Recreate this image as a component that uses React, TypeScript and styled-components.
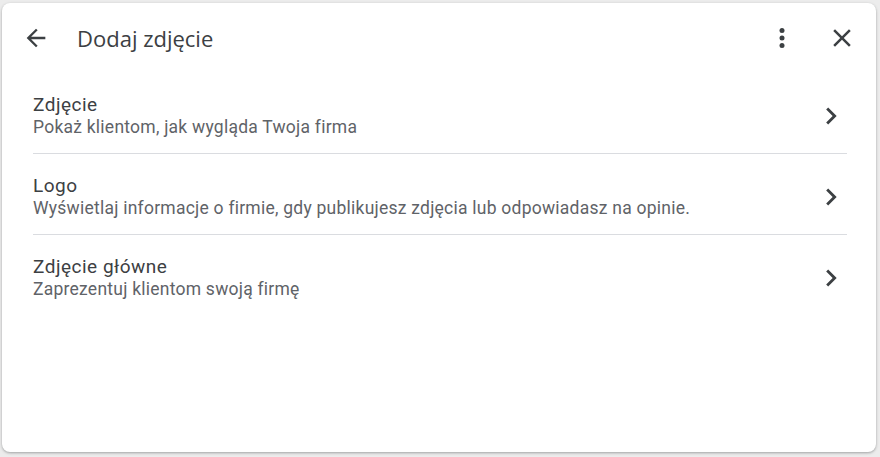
import React from 'react';
import styled, { createGlobalStyle } from 'styled-components';

const GlobalStyle = createGlobalStyle`
  html, body {
    margin: 0;
    padding: 0;
    background: #ececec;
    font-family: Roboto, "Liberation Sans", Arial, sans-serif;
  }
`;

const Page = styled.div`
  width: 880px;
  height: 457px;
  padding: 3px 4px 5px 2px;
  box-sizing: border-box;
`;

const Card = styled.div`
  height: 100%;
  background: #fff;
  border-radius: 8px;
  box-shadow: 0 1px 3px rgba(60, 64, 67, 0.3), 0 1px 2px rgba(60, 64, 67, 0.15);
  display: flex;
  flex-direction: column;
`;

const Header = styled.header`
  height: 70px;
  display: flex;
  align-items: center;
  padding: 0 19px 0 20px;
`;

const IconButton = styled.button<{ $size: number }>`
  width: ${p => p.$size}px;
  height: ${p => p.$size}px;
  border: none;
  background: none;
  padding: 0;
  display: flex;
  align-items: center;
  justify-content: center;
  color: #3c4043;
  cursor: pointer;

  svg {
    width: ${p => p.$size}px;
    height: ${p => p.$size}px;
  }
`;

const Title = styled.h1`
  margin: 0 0 0 27px;
  flex: 1;
  font-family: "Open Sans", Roboto, sans-serif;
  font-weight: 400;
  font-size: 22px;
  color: #3c4043;
`;

const Actions = styled.div`
  display: flex;
  align-items: center;
  gap: 30px;
`;

const List = styled.ul`
  list-style: none;
  margin: 0;
  padding: 0 29px 0 31px;
`;

const Item = styled.li<{ $last?: boolean }>`
  display: flex;
  align-items: center;
  height: 81px;
  padding-top: 5px;
  box-sizing: border-box;
  border-bottom: ${p => (p.$last ? 'none' : '1px solid #dadce0')};
  cursor: pointer;
`;

const Texts = styled.div`
  flex: 1;
  display: flex;
  flex-direction: column;
`;

const ItemTitle = styled.div`
  font-size: 19px;
  letter-spacing: 0.5px;
  color: #3c4043;
  line-height: 22px;
`;

const ItemSub = styled.div`
  font-size: 17.5px;
  letter-spacing: 0.24px;
  color: #5f6368;
  line-height: 22px;
`;

const Chevron = styled.div`
  width: 34px;
  height: 34px;
  color: #3c4043;
  margin-right: -1px;

  svg {
    width: 34px;
    height: 34px;
    display: block;
  }
`;

const BackIcon = () => (
  <svg viewBox="0 0 24 24" fill="currentColor">
    <path d="M20 11H7.83l5.59-5.59L12 4l-8 8 8 8 1.41-1.41L7.83 13H20v-2z" />
  </svg>
);

const MoreIcon = () => (
  <svg viewBox="0 0 24 24" fill="currentColor">
    <circle cx="12" cy="6" r="2" />
    <circle cx="12" cy="12" r="2" />
    <circle cx="12" cy="18" r="2" />
  </svg>
);

const CloseIcon = () => (
  <svg viewBox="0 0 24 24" fill="currentColor">
    <path d="M19 6.41 17.59 5 12 10.59 6.41 5 5 6.41 10.59 12 5 17.59 6.41 19 12 13.41 17.59 19 19 17.59 13.41 12z" />
  </svg>
);

const ChevronIcon = () => (
  <svg viewBox="0 0 24 24" fill="currentColor">
    <path d="M10 6 8.59 7.41 13.17 12l-4.58 4.59L10 18l6-6z" />
  </svg>
);

const options = [
  { title: 'Zdjęcie', sub: 'Pokaż klientom, jak wygląda Twoja firma' },
  {
    title: 'Logo',
    sub: 'Wyświetlaj informacje o firmie, gdy publikujesz zdjęcia lub odpowiadasz na opinie.',
  },
  { title: 'Zdjęcie główne', sub: 'Zaprezentuj klientom swoją firmę' },
];

export default function App() {
  return (
    <Page>
      <GlobalStyle />
      <Card>
        <Header>
          <IconButton $size={28} aria-label="Wstecz">
            <BackIcon />
          </IconButton>
          <Title>Dodaj zdjęcie</Title>
          <Actions>
            <IconButton $size={30} aria-label="Więcej">
              <MoreIcon />
            </IconButton>
            <IconButton $size={30} aria-label="Zamknij">
              <CloseIcon />
            </IconButton>
          </Actions>
        </Header>
        <List>
          {options.map((o, i) => (
            <Item key={o.title} $last={i === options.length - 1}>
              <Texts>
                <ItemTitle>{o.title}</ItemTitle>
                <ItemSub>{o.sub}</ItemSub>
              </Texts>
              <Chevron>
                <ChevronIcon />
              </Chevron>
            </Item>
          ))}
        </List>
      </Card>
    </Page>
  );
}
